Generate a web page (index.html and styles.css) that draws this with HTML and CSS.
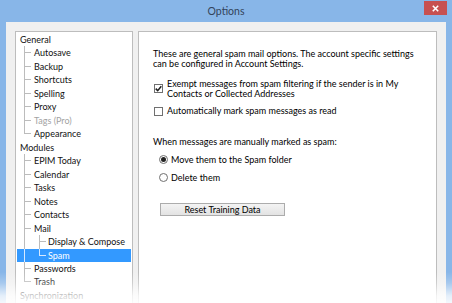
FILE: index.html
```html
<!DOCTYPE html>
<html>
<head>
<meta charset="utf-8">
<title>Options</title>
<link rel="stylesheet" href="styles.css">
</head>
<body>
<div class="window">
  <div class="titlebar">
    <div class="title">Options</div>
    <div class="close">
      <svg width="7" height="7" viewBox="0 0 7 7"><path d="M0.8 0.8 L6.2 6.2 M6.2 0.8 L0.8 6.2" stroke="#fff" stroke-width="1.6" fill="none"/></svg>
    </div>
  </div>
  <div class="client">
    <ul class="tree">
      <li class="row">General</li>
      <li class="row"><span class="g t"></span>Autosave</li>
      <li class="row"><span class="g t"></span>Backup</li>
      <li class="row"><span class="g t"></span>Shortcuts</li>
      <li class="row"><span class="g t"></span>Spelling</li>
      <li class="row"><span class="g t"></span>Proxy</li>
      <li class="row disabled"><span class="g t"></span>Tags (Pro)</li>
      <li class="row"><span class="g l"></span>Appearance</li>
      <li class="row">Modules</li>
      <li class="row"><span class="g t"></span>EPIM Today</li>
      <li class="row"><span class="g t"></span>Calendar</li>
      <li class="row"><span class="g t"></span>Tasks</li>
      <li class="row"><span class="g t"></span>Notes</li>
      <li class="row"><span class="g t"></span>Contacts</li>
      <li class="row"><span class="g t"></span>Mail</li>
      <li class="row"><span class="g v"></span><span class="g g2 t"></span>Display &amp; Compose</li>
      <li class="row selected"><span class="g v"></span><span class="g g2 l"></span>Spam</li>
      <li class="row"><span class="g t"></span>Passwords</li>
      <li class="row"><span class="g l"></span>Trash</li>
      <li class="row">Synchronization</li>
    </ul>
    <div class="panel">
      <p class="intro">These are general spam mail options. The account specific settings can be configured in Account Settings.</p>
      <label class="check first">
        <span class="box"><svg width="7" height="7" viewBox="0 0 7 7"><path d="M0.7 3.6 L2.7 5.6 L6.3 1.2" stroke="#1e1e1e" stroke-width="1.5" fill="none"/></svg></span>
        <span class="text">Exempt messages from spam filtering if the sender is in My<br>Contacts or Collected Addresses</span>
      </label>
      <label class="check second">
        <span class="box"></span>
        <span class="text">Automatically mark spam messages as read</span>
      </label>
      <p class="caption">When messages are manually marked as spam:</p>
      <label class="radio first">
        <span class="circle on"></span>
        <span class="text">Move them to the Spam folder</span>
      </label>
      <label class="radio second">
        <span class="circle"></span>
        <span class="text">Delete them</span>
      </label>
      <div class="button">Reset Training Data</div>
    </div>
  </div>
</div>
<div class="fade"></div>
</body>
</html>
```
FILE: styles.css
```css
* { box-sizing: border-box; margin: 0; padding: 0; }
html, body { width: 452px; height: 303px; overflow: hidden; }
body {
  background: #88b6e8;
  font-family: Lato, "Segoe UI", sans-serif;
  font-size: 9px;
  color: #000;
  position: relative;
}
.window { height: 303px; display: flex; flex-direction: column; }
.titlebar {
  height: 22px;
  flex: none;
  display: grid;
  grid-template-columns: 1fr auto 1fr;
  align-items: start;
}
.title {
  grid-column: 2;
  font-size: 10.5px;
  line-height: 22px;
  color: #33435a;
}
.close {
  grid-column: 3;
  justify-self: end;
  margin: 1px 5px 0 0;
  width: 23px;
  height: 14px;
  background: #c75050;
  display: flex;
  align-items: center;
  justify-content: center;
}
.close svg { display: block; }
.client {
  flex: 1;
  margin: 0 6px;
  background: #f0f0f0;
  display: flex;
  gap: 5px;
  padding: 9px 9px 0;
  overflow: hidden;
}
.tree {
  list-style: none;
  width: 118px;
  height: 290px;
  flex: none;
  background: #fff;
  border: 1px solid #bdbdbd;
  padding: 1px;
}
.row {
  display: flex;
  height: 13.47px;
  line-height: 13.47px;
  padding-left: 3px;
  white-space: nowrap;
  color: #111;
}
.row.disabled { color: #a3a3a3; }
.row.selected { background: #3399ff; color: #fff; }
.g { width: 14px; flex: none; --lc: #bcbcbc; }
.row.selected .g { --lc: #d6e9ff; }
.g.v {
  background: linear-gradient(var(--lc), var(--lc)) 4px 0 / 1px 100% no-repeat;
}
.g.t {
  background:
    linear-gradient(var(--lc), var(--lc)) 4px 0 / 1px 100% no-repeat,
    linear-gradient(var(--lc), var(--lc)) 4px 6px / 7px 1px no-repeat;
}
.g.l {
  background:
    linear-gradient(var(--lc), var(--lc)) 4px 0 / 1px 7px no-repeat,
    linear-gradient(var(--lc), var(--lc)) 4px 6px / 7px 1px no-repeat;
}
.g.g2.t {
  background:
    linear-gradient(var(--lc), var(--lc)) 5px 0 / 1px 100% no-repeat,
    linear-gradient(var(--lc), var(--lc)) 5px 6px / 7px 1px no-repeat;
}
.g.g2.l {
  background:
    linear-gradient(var(--lc), var(--lc)) 5px 0 / 1px 7px no-repeat,
    linear-gradient(var(--lc), var(--lc)) 5px 6px / 7px 1px no-repeat;
}
.panel {
  flex: none;
  width: 299px;
  height: 290px;
  background: #fff;
  border: 1px solid #bdbdbd;
  padding: 17px 14px 0;
  line-height: 10.3px;
}
.check, .radio { display: flex; align-items: center; }
.check { gap: 4px; margin-left: 1px; }
.check.first { margin-top: 9px; }
.check.second { margin-top: 7px; }
.box {
  width: 9px;
  height: 9px;
  flex: none;
  border: 1px solid #707070;
  background: #fff;
  display: flex;
  align-items: center;
  justify-content: center;
}
.box svg { display: block; }
.caption { margin-top: 21px; }
.radio { gap: 3px; margin-left: 6px; }
.radio.first { margin-top: 7px; }
.radio.second { margin-top: 7.7px; }
.circle {
  width: 9px;
  height: 9px;
  flex: none;
  border: 1px solid #707070;
  border-radius: 50%;
  background: #fff;
  display: flex;
  align-items: center;
  justify-content: center;
}
.circle.on::after {
  content: "";
  width: 5px;
  height: 5px;
  border-radius: 50%;
  background: #222;
}
.button {
  margin: 20px 0 0 7px;
  width: 125px;
  height: 13px;
  border: 1px solid #acacac;
  background: linear-gradient(#f3f3f3, #e3e3e3);
  text-align: center;
  line-height: 11px;
}
.fade {
  position: absolute;
  left: 0;
  right: 0;
  bottom: 0;
  height: 31px;
  pointer-events: none;
  background: linear-gradient(rgba(255,255,255,0) 0%, rgba(255,255,255,.25) 35%, rgba(255,255,255,.78) 77%, rgba(255,255,255,.9) 100%);
}
```
